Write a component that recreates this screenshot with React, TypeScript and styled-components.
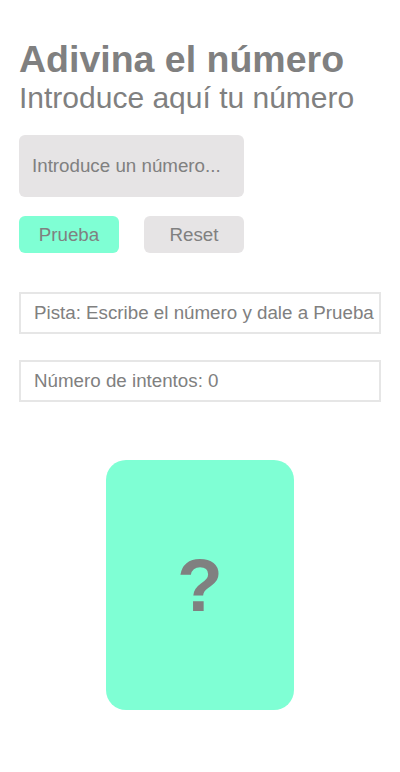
import React from "react";
import styled, { createGlobalStyle } from "styled-components";

const GlobalStyle = createGlobalStyle`
  html, body { margin: 0; padding: 0; background: #ffffff; }
  body { font-family: "Liberation Sans", Arial, sans-serif; color: #808080; }
`;

const Page = styled.main`
  display: flex;
  flex-direction: column;
  padding: 38px 19px 40px;
`;

const Title = styled.h1`
  margin: 0;
  font-size: 37.5px;
  font-weight: bold;
  line-height: 43px;
  color: #808080;
`;

const Subtitle = styled.h2`
  margin: 0;
  font-size: 30px;
  font-weight: normal;
  line-height: 34px;
  color: #808080;
`;

const NumberInput = styled.input`
  box-sizing: border-box;
  margin-top: 20px;
  width: 225px;
  height: 62px;
  border: none;
  border-radius: 6px;
  background: #e6e4e5;
  padding: 0 10px 0 13px;
  font-family: "Liberation Sans", Arial, sans-serif;
  font-size: 18.75px;
  color: #808080;
  outline: none;
  &::placeholder { color: #808080; opacity: 1; }
`;

const ButtonRow = styled.div`
  display: flex;
  gap: 25px;
  margin-top: 19px;
`;

const Button = styled.button<{ $primary?: boolean }>`
  box-sizing: border-box;
  width: 100px;
  height: 37px;
  border: none;
  border-radius: 6px;
  background: ${(p) => (p.$primary ? "#7fffd4" : "#e6e4e5")};
  color: #808080;
  font-family: "Liberation Sans", Arial, sans-serif;
  font-size: 18.75px;
  padding: 0;
  cursor: pointer;
`;

const InfoBox = styled.div<{ $gap: number }>`
  box-sizing: border-box;
  margin-top: ${(p) => p.$gap}px;
  width: 362px;
  height: 42px;
  border: 2px solid #e6e6e6;
  display: flex;
  align-items: center;
  padding: 0 13px;
  font-size: 18.75px;
  color: #808080;
  white-space: nowrap;
`;

const Card = styled.div`
  align-self: center;
  margin-top: 58px;
  width: 188px;
  height: 250px;
  border-radius: 20px;
  background: #7fffd4;
  display: flex;
  align-items: center;
  justify-content: center;
  font-size: 75px;
  font-weight: bold;
  color: #808080;
`;

export default function App() {
  return (
    <>
      <GlobalStyle />
      <Page>
        <Title>Adivina el número</Title>
        <Subtitle>Introduce aquí tu número</Subtitle>
        <NumberInput type="text" inputMode="numeric" placeholder="Introduce un número..." />
        <ButtonRow>
          <Button $primary>Prueba</Button>
          <Button>Reset</Button>
        </ButtonRow>
        <InfoBox $gap={39}>Pista: Escribe el número y dale a Prueba</InfoBox>
        <InfoBox $gap={26}>Número de intentos: 0</InfoBox>
        <Card>?</Card>
      </Page>
    </>
  );
}
